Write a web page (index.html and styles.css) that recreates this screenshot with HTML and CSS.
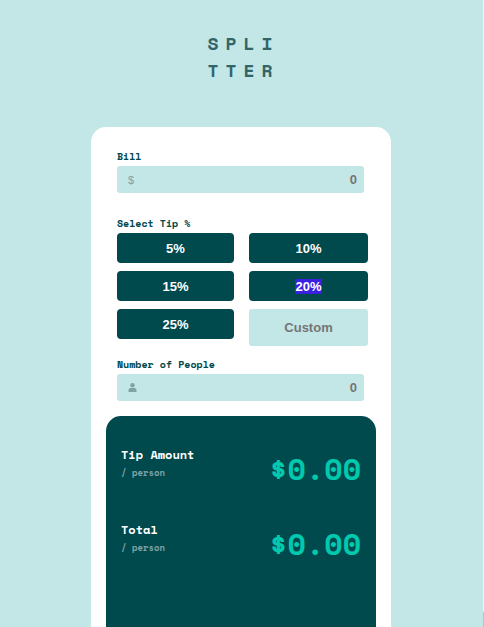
FILE: index.html
```html
<!DOCTYPE html>
<html lang="en">
<head>
<meta charset="utf-8">
<meta name="viewport" content="width=device-width, initial-scale=1">
<title>Splitter</title>
<link rel="stylesheet" href="styles.css">
</head>
<body>
<h1 class="logo">SPLI<br>TTER</h1>
<main class="card">
  <form class="form">
    <label class="label" for="bill">Bill</label>
    <div class="field">
      <span class="currency">$</span>
      <input class="input" id="bill" type="text" inputmode="decimal" placeholder="0">
    </div>
    <fieldset class="tips">
      <legend class="label">Select Tip %</legend>
      <div class="tip-grid">
        <button class="tip" type="button">5%</button>
        <button class="tip" type="button">10%</button>
        <button class="tip" type="button">15%</button>
        <button class="tip" type="button"><span class="selected">20%</span></button>
        <button class="tip" type="button">25%</button>
        <input class="custom" type="text" placeholder="Custom" aria-label="Custom tip">
      </div>
    </fieldset>
    <label class="label" for="people">Number of People</label>
    <div class="field">
      <svg class="person" viewBox="0 0 8 9" aria-hidden="true"><circle cx="4" cy="2.200" r="2.200"/><path d="M2 5h4A2 2 0 0 1 8 7V9H0V7A2 2 0 0 1 2 5z"/></svg>
      <input class="input" id="people" type="text" inputmode="numeric" placeholder="0">
    </div>
  </form>
  <section class="results">
    <div class="result">
      <div>
        <h2 class="name">Tip Amount</h2>
        <p class="unit">/ person</p>
      </div>
      <output class="amount">$0.00</output>
    </div>
    <div class="result">
      <div>
        <h2 class="name">Total</h2>
        <p class="unit">/ person</p>
      </div>
      <output class="amount">$0.00</output>
    </div>
  </section>
</main>
</body>
</html>
```

FILE: styles.css
```css
* {
  box-sizing: border-box;
}

body {
  margin: 0;
  height: 100vh;
  overflow: hidden;
  display: flex;
  flex-direction: column;
  align-items: center;
  padding-right: 2px;
  background: #c3e6e7;
  color: #00494d;
  font-family: "Space Mono", "Liberation Mono", monospace;
  font-weight: 700;
}

/* scroll track along the window edge */
body::after {
  content: "";
  position: fixed;
  top: 0;
  right: 0;
  width: 1px;
  height: 100vh;
  background: linear-gradient(to top, #c1c1c1 15px, #f1f1f1 15px);
}

.logo {
  margin: 30px 0 43px;
  padding-left: 5px;
  color: #326567;
  font-size: 18px;
  line-height: 27px;
  letter-spacing: 7px;
}

.card {
  flex: 1;
  display: flex;
  flex-direction: column;
  width: 300px;
  max-width: 100%;
  padding: 21px 15px 0;
  border-radius: 15px 15px 0 0;
  background: #fff;
}

.form {
  padding: 0 8px 0 11px;
}

.label {
  display: block;
  padding: 1px 0;
  font-size: 10px;
  line-height: 16px;
}

.field {
  display: flex;
  align-items: center;
  height: 27px;
  margin-right: 4px;
  padding: 0 7px 0 11px;
  border-radius: 3px;
  background: #c3e6e7;
}

.currency {
  color: #7fa3a5;
  font: 400 11px/14px "Liberation Sans", Arial, sans-serif;
}

.person {
  width: 9px;
  height: 9px;
  flex: none;
  fill: #7fa3a5;
}

.input {
  flex: 1;
  min-width: 0;
  padding: 0;
  border: 0;
  background: none;
  text-align: right;
}

.input,
.custom,
.tip {
  font: 700 13px "Liberation Sans", Arial, sans-serif;
}

.input::placeholder,
.custom::placeholder {
  color: #757575;
  opacity: 1;
}

.tips {
  min-width: 0;
  margin: 22px 0 10px;
  padding: 0;
  border: 0;
}

.tip-grid {
  display: grid;
  grid-template-columns: 117fr 119fr;
  align-items: start;
  gap: 8px 15px;
}

.tip {
  height: 30px;
  padding: 0;
  border: 0;
  border-radius: 4px;
  background: #00494d;
  color: #fff;
}

.selected {
  background: #3a20df;
}

.custom {
  width: 100%;
  height: 37px;
  padding: 0;
  border: 0;
  border-radius: 3px;
  background: #c3e6e7;
  text-align: center;
}

.results {
  flex: 1;
  margin-top: 15px;
  padding: 30px 15px 0;
  border-radius: 15px 15px 0 0;
  background: #00494d;
}

.result {
  display: flex;
  justify-content: space-between;
  height: 75px;
}

.name {
  margin: 0;
  color: #fff;
  font-size: 12px;
  line-height: 18px;
}

.unit {
  margin: 0;
  color: #7fa3a5;
  font-size: 9px;
  line-height: 18px;
}

.amount {
  color: #00c9ae;
  font-size: 30px;
  line-height: 46px;
}
```
